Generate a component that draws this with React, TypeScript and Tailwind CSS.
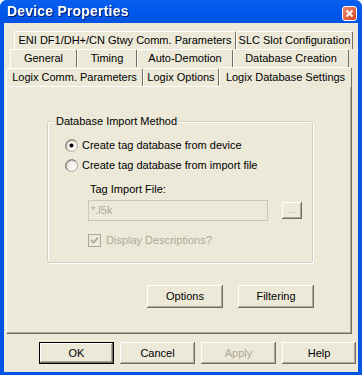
import React from "react";

const font = { fontFamily: '"Liberation Sans", Arial, sans-serif' };

// classic 3D bevel for buttons
const bevel =
  "bg-[#ECE9D8] shadow-[inset_-1px_-1px_0_#716F64,inset_1px_1px_0_#ffffff,inset_-2px_-2px_0_#ACA899]";

function Tab({
  label,
  width,
  selected = false,
}: {
  label: string;
  width: number;
  selected?: boolean;
}) {
  return (
    <div
      style={{ width }}
      className={`flex items-center justify-center border-l border-t border-r border-l-white border-t-white border-r-[#716F64] rounded-t-[2px] ${
        selected ? "h-[20px] -mb-px bg-[#ECE9D8] relative z-10" : "h-[18px]"
      }`}
    >
      <span className="text-[11px] text-black leading-none">{label}</span>
    </div>
  );
}

function Radio({ checked }: { checked?: boolean }) {
  return (
    <svg width="13" height="13" viewBox="0 0 13 13">
      <defs>
        <radialGradient id="rg" cx="0.7" cy="0.7" r="0.8">
          <stop offset="0" stopColor="#ffffff" />
          <stop offset="1" stopColor="#E2E0D6" />
        </radialGradient>
      </defs>
      <circle cx="6.5" cy="6.5" r="6" fill="url(#rg)" stroke="#ACA899" />
      <path d="M2.3 10.7 A6 6 0 0 1 10.7 2.3" fill="none" stroke="#716F64" />
      {checked && <circle cx="6.5" cy="6.5" r="2" fill="#000" />}
    </svg>
  );
}

function Button({
  label,
  width,
  height = 23,
  disabled = false,
  primary = false,
}: {
  label: string;
  width: number;
  height?: number;
  disabled?: boolean;
  primary?: boolean;
}) {
  return (
    <div
      style={{ width, height }}
      className={`flex items-center justify-center text-[11px] ${bevel} ${
        primary ? "outline outline-1 outline-black -outline-offset-1 shadow-[inset_-2px_-2px_0_#716F64,inset_2px_2px_0_#ffffff,inset_-3px_-3px_0_#ACA899]" : ""
      } ${disabled ? "text-[#ACA899]" : "text-black"}`}
    >
      {label}
    </div>
  );
}

export default function App() {
  return (
    <div
      style={font}
      className="w-[362px] h-[375px] bg-[#0054E3] rounded-t-[7px] flex flex-col overflow-hidden"
    >
      {/* Title bar */}
      <div className="h-[22px] shrink-0 flex items-center justify-between pl-[7px] pr-[5px] bg-gradient-to-b from-[#0A5FEF] via-[#0058EE] to-[#0054E3]">
        <span className="text-white font-bold text-[14px] tracking-[0.2px] drop-shadow-[1px_1px_0_#0A1E6A]">
          Device Properties
        </span>
        <div className="w-[15px] h-[15px] mt-[4px] rounded-[3px] border border-white bg-gradient-to-br from-[#F08C6E] to-[#D4421E] flex items-center justify-center">
          <svg width="9" height="9" viewBox="0 0 9 9">
            <path d="M1.5 1.5 L7.5 7.5 M7.5 1.5 L1.5 7.5" stroke="#fff" strokeWidth="1.8" />
          </svg>
        </div>
      </div>

      {/* Body */}
      <div className="flex-1 mx-[4px] mb-[3px] mt-[1px] bg-[#ECE9D8] flex flex-col pt-[8px] px-[2px]">
        {/* Tabs */}
        <div className="flex flex-col">
          <div className="flex pl-[8px]">
            <Tab label="ENI DF1/DH+/CN Gtwy Comm. Parameters" width={222} />
            <Tab label="SLC Slot Configuration" width={117} />
          </div>
          <div className="flex pl-[4px]">
            <Tab label="General" width={67} />
            <Tab label="Timing" width={60} />
            <Tab label="Auto-Demotion" width={96} />
            <Tab label="Database Creation" width={116} />
          </div>
          <div className="flex items-end">
            <Tab label="Logix Comm. Parameters" width={137} />
            <Tab label="Logix Options" width={76} />
            <Tab label="Logix Database Settings" width={133} selected />
          </div>
        </div>

        {/* Panel */}
        <div className="w-[346px] h-[248px] border border-t-white border-l-white border-r-[#716F64] border-b-[#716F64] shadow-[inset_-1px_-1px_0_#ACA899] flex flex-col pl-[40px] pt-[34px]">
          {/* Group box */}
          <div className="relative w-[266px] h-[142px] border border-[#D0D0BF] shadow-[1px_1px_0_#ffffff,inset_1px_1px_0_#ffffff] rounded-[2px] pl-[17px] pt-[17px] flex flex-col">
            <span className="absolute -top-[7px] left-[6px] px-[2px] bg-[#ECE9D8] text-[11px] leading-[13px] text-black">
              Database Import Method
            </span>
            <div className="flex items-center gap-[4px] h-[13px]">
              <Radio checked />
              <span className="text-[11px] text-black">Create tag database from device</span>
            </div>
            <div className="flex items-center gap-[4px] h-[13px] mt-[7px]">
              <Radio />
              <span className="text-[11px] text-black">Create tag database from import file</span>
            </div>
            <span className="text-[11px] text-black mt-[11px] ml-[25px] leading-[13px]">
              Tag Import File:
            </span>
            <div className="flex items-center mt-[4px] ml-[23px]">
              <div className="w-[180px] h-[21px] border border-[#C9C7BA] bg-[#ECE9D8] flex items-center pl-[2px] text-[11px] text-[#ACA899]">
                *.l5k
              </div>
              <div
                className={`w-[20px] h-[17px] ml-[14px] flex items-center justify-center text-[9px] text-[#ACA899] ${bevel}`}
              >
                ...
              </div>
            </div>
            <div className="flex items-center gap-[5px] mt-[11px] ml-[23px]">
              <div className="w-[13px] h-[13px] border border-[#ACA899] bg-[#ECE9D8] flex items-center justify-center">
                <svg width="9" height="9" viewBox="0 0 9 9">
                  <path d="M1 4 L3.5 6.5 L8 1.5" fill="none" stroke="#ACA899" strokeWidth="1.8" />
                </svg>
              </div>
              <span className="text-[11px] text-[#ACA899]">Display Descriptions?</span>
            </div>
          </div>

          <div className="flex gap-[15px] mt-[22px] ml-[100px]">
            <Button label="Options" width={76} />
            <Button label="Filtering" width={76} />
          </div>
        </div>

        {/* Bottom buttons */}
        <div className="flex justify-end gap-[6px] mt-[8px]">
          <Button label="OK" width={75} height={22} primary />
          <Button label="Cancel" width={75} height={22} />
          <Button label="Apply" width={75} height={22} disabled />
          <Button label="Help" width={74} height={22} />
        </div>
      </div>
    </div>
  );
}
